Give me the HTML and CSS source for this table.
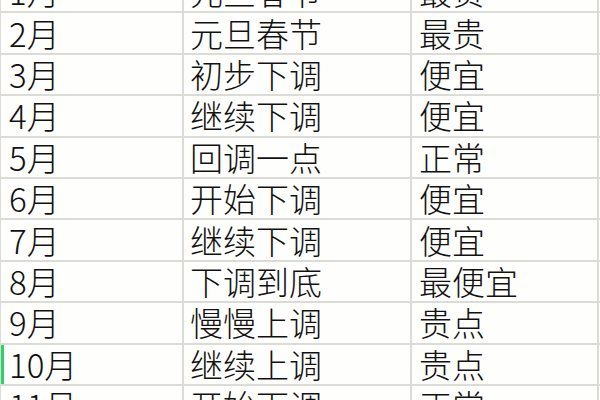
FILE: index.html
```html
<!DOCTYPE html>
<html lang="zh-CN">
<head>
<meta charset="utf-8">
<link rel="stylesheet" href="styles.css">
</head>
<body>
<div class="sheet">
  <div class="row"><div class="cell c1">1月</div><div class="cell c2">元旦春节</div><div class="cell c3">最贵</div><div class="cell c4"></div></div>
  <div class="row"><div class="cell c1">2月</div><div class="cell c2">元旦春节</div><div class="cell c3">最贵</div><div class="cell c4"></div></div>
  <div class="row"><div class="cell c1">3月</div><div class="cell c2">初步下调</div><div class="cell c3">便宜</div><div class="cell c4"></div></div>
  <div class="row"><div class="cell c1">4月</div><div class="cell c2">继续下调</div><div class="cell c3">便宜</div><div class="cell c4"></div></div>
  <div class="row"><div class="cell c1">5月</div><div class="cell c2">回调一点</div><div class="cell c3">正常</div><div class="cell c4"></div></div>
  <div class="row"><div class="cell c1">6月</div><div class="cell c2">开始下调</div><div class="cell c3">便宜</div><div class="cell c4"></div></div>
  <div class="row"><div class="cell c1">7月</div><div class="cell c2">继续下调</div><div class="cell c3">便宜</div><div class="cell c4"></div></div>
  <div class="row"><div class="cell c1">8月</div><div class="cell c2">下调到底</div><div class="cell c3">最便宜</div><div class="cell c4"></div></div>
  <div class="row"><div class="cell c1">9月</div><div class="cell c2">慢慢上调</div><div class="cell c3">贵点</div><div class="cell c4"></div></div>
  <div class="row"><div class="cell c1 active">10月</div><div class="cell c2">继续上调</div><div class="cell c3">贵点</div><div class="cell c4"></div></div>
  <div class="row"><div class="cell c1">11月</div><div class="cell c2">开始下调</div><div class="cell c3">正常</div><div class="cell c4"></div></div>
</div>
</body>
</html>
```

FILE: styles.css
```css
html, body {
  margin: 0;
  padding: 0;
  background: #fefefc;
  overflow: hidden;
}
body {
  width: 600px;
  height: 400px;
}
.sheet {
  margin-top: -28px;
  display: flex;
  flex-direction: column;
  border-left: 1px solid #dcdcd6;
  font-family: "Noto Sans CJK SC", "Noto Sans", sans-serif;
  font-weight: 300;
  font-size: 33px;
  color: #111;
}
.row {
  display: grid;
  grid-template-columns: 183px 228px 187px 1fr;
  height: 41.4px;
}
.cell {
  box-sizing: border-box;
  border-right: 2px solid #dcdcd6;
  border-bottom: 2px solid #dcdcd6;
  display: flex;
  align-items: center;
  white-space: nowrap;
  overflow: hidden;
  line-height: 1;
}
.c1 { padding-left: 8px; }
.c2 { padding-left: 6px; }
.c3 { padding-left: 7px; }
.c4 { border-right: none; }
.active {
  box-shadow: inset 3px 0 0 #2fcf6a;
}
```
